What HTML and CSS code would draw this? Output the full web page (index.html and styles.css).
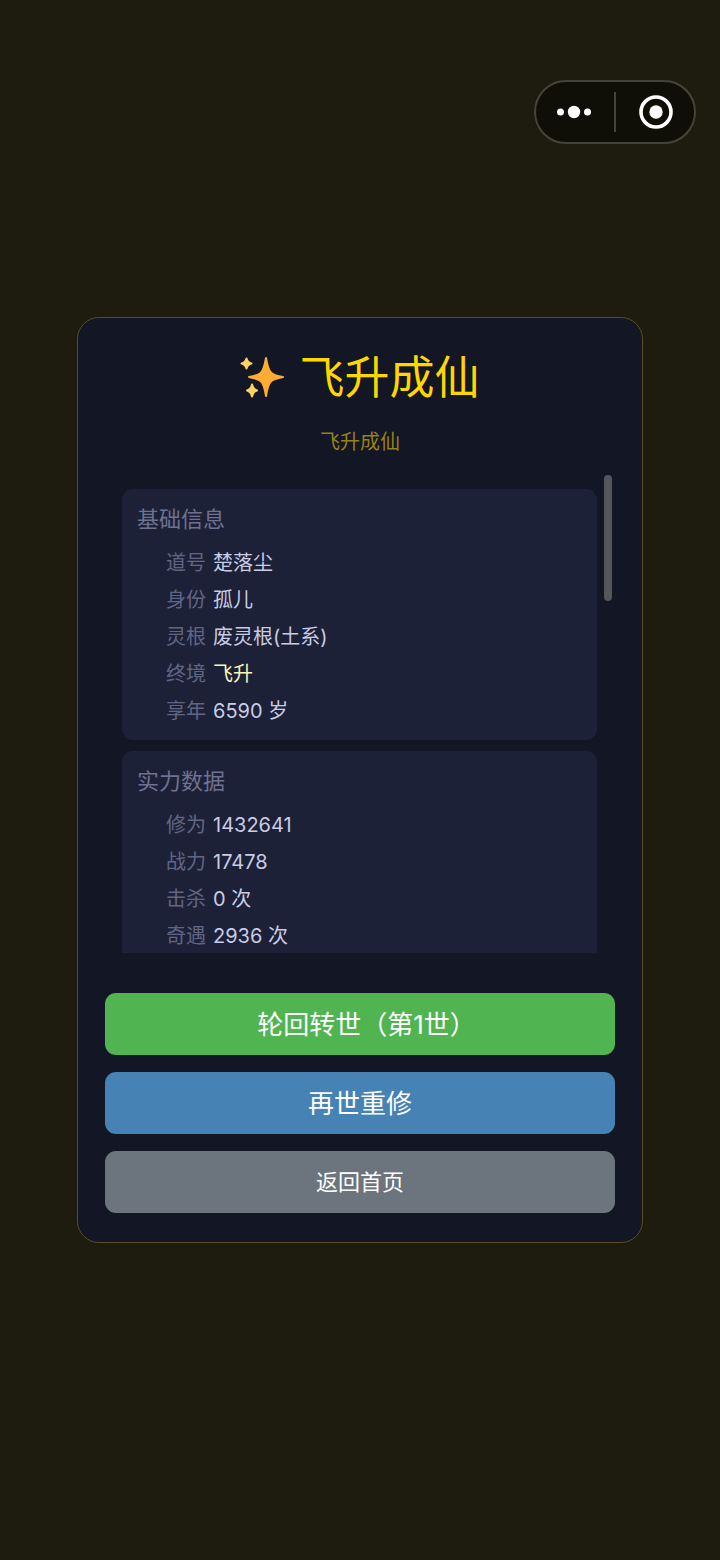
FILE: index.html
```html
<!DOCTYPE html>
<html lang="zh-CN">
<head>
    <meta charset="UTF-8">
    <meta name="viewport" content="width=device-width, initial-scale=1.0">
    <title>飞升成仙</title>
    <link rel="stylesheet" href="styles.css">
</head>
<body>
    <div class="capsule">
        <button type="button" class="capsule-btn" aria-label="更多">
            <svg width="36" height="36" viewBox="0 0 36 36" fill="#fff">
                <circle cx="3.5" cy="18" r="3.5"/>
                <circle cx="17" cy="18" r="6.2"/>
                <circle cx="30.5" cy="18" r="3.5"/>
            </svg>
        </button>
        <span class="capsule-line"></span>
        <button type="button" class="capsule-btn" aria-label="关闭">
            <svg width="36" height="36" viewBox="0 0 36 36">
                <circle cx="19" cy="18" r="15" fill="none" stroke="#fff" stroke-width="3.6"/>
                <circle cx="19" cy="18" r="6.7" fill="#fff"/>
            </svg>
        </button>
    </div>

    <main class="page">
        <div class="modal">
            <h1 class="modal-title">
                <svg class="sparkle" width="44" height="44" viewBox="0 0 44 44" stroke-width="2" stroke-linejoin="round">
                    <path fill="#ffac33" stroke="#ffac33" d="M26 2Q28 14 31 16.500Q33 19 43 21Q33 23 31 25.500Q28 28 26 40Q24 28 21 25.500Q19 23 9 21Q19 19 21 16.500Q24 14 26 2z"/>
                    <path fill="#ffd166" stroke="#ffd166" d="M6.500 2.500Q7.500 6.500 11.500 7.500Q7.500 8.500 6.500 12.500Q5.500 8.500 1.500 7.500Q5.500 6.500 6.500 2.500z"/>
                    <path fill="#ffd166" stroke="#ffd166" d="M12 28.500Q13 33.500 17 34.500Q13 35.500 12 40.500Q11 35.500 7 34.500Q11 33.500 12 28.500z"/>
                </svg>
                <span>飞升成仙</span>
            </h1>
            <p class="modal-subtitle">飞升成仙</p>

            <div class="record">
                <div class="record-scroll">
                    <section class="card">
                        <h2>基础信息</h2>
                        <dl>
                            <div class="row"><dt>道号</dt><dd>楚落尘</dd></div>
                            <div class="row"><dt>身份</dt><dd>孤儿</dd></div>
                            <div class="row"><dt>灵根</dt><dd>废灵根(土系)</dd></div>
                            <div class="row"><dt>终境</dt><dd class="realm">飞升</dd></div>
                            <div class="row"><dt>享年</dt><dd>6590 岁</dd></div>
                        </dl>
                    </section>

                    <section class="card">
                        <h2>实力数据</h2>
                        <dl>
                            <div class="row"><dt>修为</dt><dd>1432641</dd></div>
                            <div class="row"><dt>战力</dt><dd>17478</dd></div>
                            <div class="row"><dt>击杀</dt><dd>0 次</dd></div>
                            <div class="row"><dt>奇遇</dt><dd>2936 次</dd></div>
                        </dl>
                    </section>
                </div>
                <div class="scroll-thumb"></div>
            </div>

            <div class="actions">
                <button type="button" class="btn btn-green">轮回转世（第1世<span class="half">）</span></button>
                <button type="button" class="btn btn-blue">再世重修</button>
                <button type="button" class="btn btn-gray">返回首页</button>
            </div>
        </div>
    </main>
</body>
</html>
```
FILE: styles.css
```css
* {
    box-sizing: border-box;
}

body {
    margin: 0;
    background-color: #1e1c0e;
    color: #c8cce4;
    font-family: Inter, "Noto Sans CJK SC", sans-serif;
    font-size: 20px;
}

h1, h2, p, dl, dd {
    margin: 0;
    font-weight: normal;
}

button {
    border: none;
    padding: 0;
    font-family: inherit;
    cursor: pointer;
}

/* 右上角胶囊按钮 */
.capsule {
    position: absolute;
    top: 80px;
    right: 24px;
    display: flex;
    align-items: center;
    width: 162px;
    height: 64px;
    border: 2px solid #45433a;
    border-radius: 32px;
    background-color: #0f0f07;
}

.capsule-btn {
    display: flex;
    flex: 1;
    align-items: center;
    justify-content: center;
    height: 100%;
    background: none;
}

.capsule-line {
    width: 2px;
    height: 40px;
    background-color: #45433a;
}

/* 结算弹窗 */
.page {
    display: flex;
    align-items: center;
    justify-content: center;
    min-height: 100vh;
    padding: 0 77px;
}

.modal {
    width: 100%;
    max-width: 720px;
    padding: 29px 27px;
    border: 1px solid #5a4c20;
    border-radius: 22px;
    background-color: #131624;
}

.modal-title {
    display: flex;
    align-items: center;
    justify-content: center;
    gap: 15px;
    color: #ffd700;
    font-size: 45px;
    line-height: 62px;
}

.modal-subtitle {
    margin: 19px 0;
    color: #968216;
    text-align: center;
    line-height: 28px;
}

.record {
    position: relative;
}

.record-scroll {
    display: flex;
    flex-direction: column;
    gap: 11px;
    height: 478px;
    padding: 14px 18px 0 17px;
    overflow-y: auto;
    scrollbar-width: none;
}

.scroll-thumb {
    position: absolute;
    top: 0;
    right: 3px;
    width: 8px;
    height: 126px;
    border-radius: 4px;
    background-color: #55565c;
}

.card {
    flex-shrink: 0;
    padding: 12px 15px 10px;
    border-radius: 11px;
    background-color: #1d2137;
}

.card h2 {
    margin-bottom: 8px;
    color: #6d7192;
    font-size: 22px;
    line-height: 36px;
}

.row {
    display: flex;
    gap: 7px;
    padding-left: 29px;
    line-height: 37px;
}

.row dt {
    color: #616585;
}

.row .realm {
    color: #f6f8b4;
}

.actions {
    display: flex;
    flex-direction: column;
    gap: 17px;
    margin-top: 40px;
}

.btn {
    height: 62px;
    padding-bottom: 4px;
    border-radius: 11px;
    color: #fff;
    font-size: 26px;
}

.btn-green {
    background-color: #50b450;
}

.btn-blue {
    background-color: #4682b4;
}

.btn-gray {
    background-color: #6c757d;
    font-size: 22px;
}

/* 右括号只占半个字宽 */
.half {
    font-feature-settings: "halt";
}
```
